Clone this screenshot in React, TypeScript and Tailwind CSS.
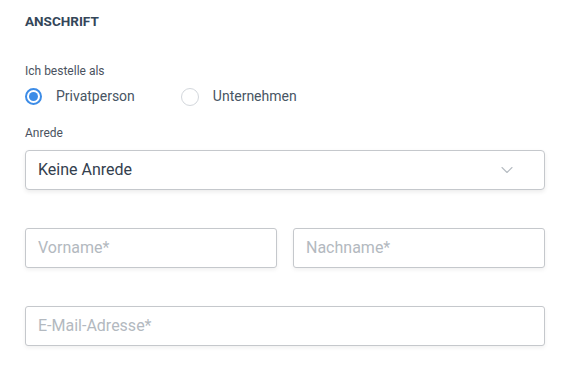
import { ChevronDown } from "lucide-react";

const Radio = ({ label, checked }: { label: string; checked?: boolean }) => (
  <label className="flex items-center gap-[14px]">
    {checked ? (
      <span className="flex h-[17px] w-[17px] items-center justify-center rounded-full border-2 border-[#3c8ce7]">
        <span className="h-[9px] w-[9px] rounded-full bg-[#3c8ce7]" />
      </span>
    ) : (
      <span className="h-[18px] w-[18px] rounded-full border-[1.5px] border-[#d3d7dc]" />
    )}
    <span className="text-[14px] text-[#475563]">{label}</span>
  </label>
);

const Field = ({ placeholder }: { placeholder: string }) => (
  <div className="flex h-[40px] flex-1 items-center rounded-[3px] border border-[#c5c8cc] bg-white px-3 shadow-[0_2px_4px_rgba(0,0,0,0.06)]">
    <span className="text-[16px] text-[#b3b9c0]">{placeholder}</span>
  </div>
);

export default function App() {
  return (
    <div
      className="min-h-screen bg-white px-[25px] pt-[13px] text-[#2f3e4e]"
      style={{ fontFamily: "Roboto, 'Liberation Sans', sans-serif" }}
    >
      <h2 className="text-[13.5px] font-bold leading-[16px] text-[#344659]">ANSCHRIFT</h2>

      <p className="mt-[35px] text-[12px] leading-[14px] text-[#4a5260]">Ich bestelle als</p>
      <div className="mt-[8px] flex items-center gap-[46px]">
        <Radio label="Privatperson" checked />
        <Radio label="Unternehmen" />
      </div>

      <p className="mt-[19px] text-[12px] leading-[14px] text-[#4a5260]">Anrede</p>
      <div className="mt-[10px] flex h-[40px] w-[520px] items-center justify-between rounded-[4px] border border-[#c5c8cc] bg-white pl-3 pr-[27px] shadow-[0_2px_4px_rgba(0,0,0,0.08)]">
        <span className="text-[16px] text-[#33404e]">Keine Anrede</span>
        <ChevronDown size={20} strokeWidth={1.3} className="text-[#b6bcc2]" />
      </div>

      <div className="mt-[38px] flex w-[520px] gap-[16px]">
        <Field placeholder="Vorname*" />
        <Field placeholder="Nachname*" />
      </div>

      <div className="mt-[38px] flex w-[520px]">
        <Field placeholder="E-Mail-Adresse*" />
      </div>
    </div>
  );
}
